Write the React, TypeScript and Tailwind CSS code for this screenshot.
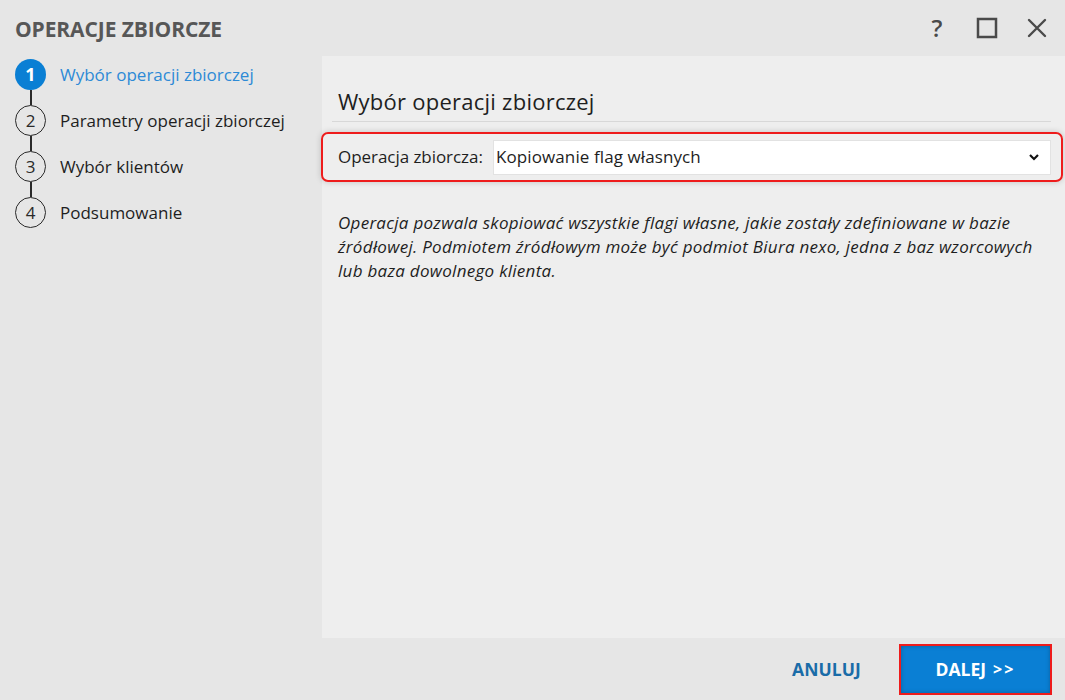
import React from "react";

const steps = [
  { n: 1, label: "Wybór operacji zbiorczej", active: true },
  { n: 2, label: "Parametry operacji zbiorczej" },
  { n: 3, label: "Wybór klientów" },
  { n: 4, label: "Podsumowanie" },
];

const font = { fontFamily: '"Open Sans", "Noto Sans", sans-serif' };

export default function App() {
  return (
    <div
      className="w-[1065px] h-[700px] bg-[#e6e6e6] flex flex-col overflow-hidden text-[#1e1e1e]"
      style={font}
    >
      {/* header */}
      <div className="h-[56px] flex items-center pl-[15px] pr-[14px] pt-[3px] shrink-0">
        <h1 className="text-[21px] font-bold text-[#575757] tracking-[-0.1px]">OPERACJE ZBIORCZE</h1>
        <div className="ml-auto flex items-center gap-[22px] text-[#4a4a4a] -mt-[3px]">
          <span className="text-[24px] font-semibold leading-none w-[28px] text-center">?</span>
          <svg width="28" height="28" viewBox="0 0 28 28">
            <rect x="5" y="5" width="18" height="18" fill="none" stroke="#4a4a4a" strokeWidth="2.5" />
          </svg>
          <svg width="28" height="28" viewBox="0 0 28 28">
            <path d="M6 6 L22 22 M22 6 L6 22" stroke="#4a4a4a" strokeWidth="2.4" strokeLinecap="round" />
          </svg>
        </div>
      </div>

      <div className="flex flex-1 min-h-0">
        {/* steps */}
        <div className="w-[322px] shrink-0 pl-[15px] pt-[3px]">
          {steps.map((s, i) => (
            <div key={s.n}>
              <div className="flex items-center h-[31px]">
                <div
                  className={
                    s.active
                      ? "w-[31px] h-[31px] rounded-full bg-[#0a7fd4] text-white font-bold text-[18px] flex items-center justify-center"
                      : "w-[31px] h-[31px] rounded-full border-[1.5px] border-[#2a2a2a] text-[#2a2a2a] text-[17px] flex items-center justify-center"
                  }
                >
                  {s.n}
                </div>
                <span
                  className={
                    "ml-[14px] text-[17px] tracking-[0px] " +
                    (s.active ? "text-[#2d8ad6]" : "text-[#1e1e1e]")
                  }
                >
                  {s.label}
                </span>
              </div>
              {i < steps.length - 1 && <div className="ml-[15px] w-[1.5px] h-[15px] bg-[#2a2a2a]" />}
            </div>
          ))}
        </div>

        {/* content */}
        <div className="flex-1 bg-[#eeeeee] pt-[27px] pl-[16px] pr-[14px]">
          <h2 className="text-[22px] tracking-[0.25px] text-[#1e1e1e] h-[36px] leading-[36px]">
            Wybór operacji zbiorczej
          </h2>
          <div className="h-px bg-[#d8d8d8] ml-[-6px] mt-[2px]" />
          <div className="mt-[10px] ml-[-17px] mr-[-12px] h-[50px] border-2 border-[#ee1c1c] rounded-[7px] flex items-center pl-[15px] pr-[10px] shadow-[0_0_6px_rgba(0,0,0,0.18)]">
            <span className="text-[17px] tracking-[-0.05px] w-[155px] shrink-0">Operacja zbiorcza:</span>
            <div className="flex-1 h-[35px] bg-white border border-[#e2e2e2] flex items-center pl-[2px] pr-[10px]">
              <span className="text-[17px] tracking-[0.1px]">Kopiowanie flag własnych</span>
              <svg className="ml-auto" width="12" height="12" viewBox="0 0 12 12">
                <path d="M2 4 L6 8 L10 4" fill="none" stroke="#111" strokeWidth="2.2" />
              </svg>
            </div>
          </div>
          <p className="mt-[29px] text-[17px] italic leading-[24px] tracking-[0.28px] text-[#1e1e1e]">
            Operacja pozwala skopiować wszystkie flagi własne, jakie zostały zdefiniowane w bazie
            <br />
            źródłowej. Podmiotem źródłowym może być podmiot Biura nexo, jedna z baz wzorcowych
            <br />
            lub baza dowolnego klienta.
          </p>
        </div>
      </div>

      {/* footer */}
      <div className="h-[62px] shrink-0 flex items-center justify-end pr-[13px]">
        <button className="text-[17.5px] font-bold text-[#1a6ca8] mr-[38px] tracking-[0.1px]">ANULUJ</button>
        <button className="w-[153px] h-[51px] border-2 border-[#ee1c1c] bg-[#0a7fd4] text-white font-bold text-[17.5px] flex items-center justify-center gap-[7px] shadow-[inset_0_0_4px_rgba(0,0,0,0.25)]">
          <span>DALEJ</span>
          <span className="text-[16px] tracking-[2px]">&gt;&gt;</span>
        </button>
      </div>
    </div>
  );
}
